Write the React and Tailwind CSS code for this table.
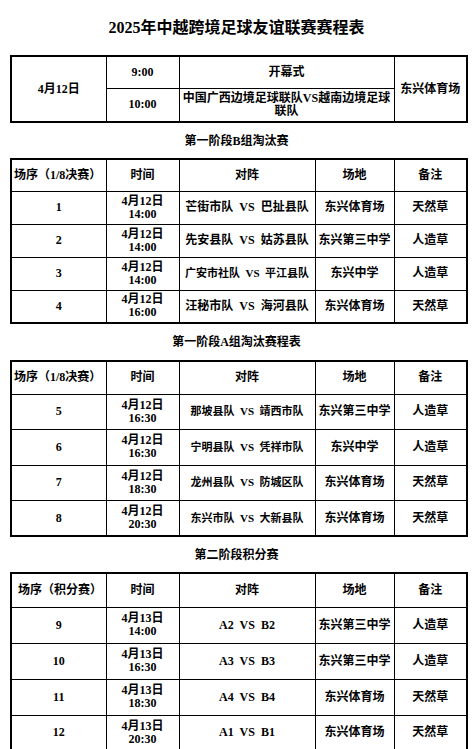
const font = {
  fontFamily: '"Liberation Serif", "Noto Sans CJK SC", serif',
};

const groupB = [
  ["1", "4月12日", "14:00", "芒街市队 VS 巴扯县队", "东兴体育场", "天然草", "text-[12px]"],
  ["2", "4月12日", "14:00", "先安县队 VS 姑苏县队", "东兴第三中学", "人造草", "text-[12px]"],
  ["3", "4月12日", "14:00", "广安市社队 VS 平江县队", "东兴中学", "人造草", "text-[11px]"],
  ["4", "4月12日", "16:00", "汪秘市队 VS 海河县队", "东兴体育场", "天然草", "text-[12px]"],
];

const groupA = [
  ["5", "4月12日", "16:30", "那坡县队 VS 靖西市队", "东兴第三中学", "人造草", "text-[11px]"],
  ["6", "4月12日", "16:30", "宁明县队 VS 凭祥市队", "东兴中学", "人造草", "text-[11px]"],
  ["7", "4月12日", "18:30", "龙州县队 VS 防城区队", "东兴体育场", "天然草", "text-[11px]"],
  ["8", "4月12日", "20:30", "东兴市队 VS 大新县队", "东兴体育场", "天然草", "text-[11px]"],
];

const points = [
  ["9", "4月13日", "14:00", "A2 VS B2", "东兴第三中学", "人造草", "text-[12px]"],
  ["10", "4月13日", "16:30", "A3 VS B3", "东兴第三中学", "人造草", "text-[12px]"],
  ["11", "4月13日", "18:30", "A4 VS B4", "东兴体育场", "天然草", "text-[12px]"],
  ["12", "4月13日", "20:30", "A1 VS B1", "东兴体育场", "天然草", "text-[12px]"],
];

const td = "border border-black p-0 text-center align-middle font-bold text-[12px] leading-[13px]";

const SectionTitle = ({ children, h }) => (
  <div className={`flex items-center justify-center font-bold text-[12px] ${h}`}>
    {children}
  </div>
);

const MatchTable = ({ firstHead, rows, headH, rowH }) => (
  <table className="ml-[10px] w-[456px] table-fixed border-collapse border-2 border-black">
    <colgroup>
      <col className="w-[95px]" />
      <col className="w-[73px]" />
      <col className="w-[136px]" />
      <col className="w-[79px]" />
      <col className="w-[73px]" />
    </colgroup>
    <tbody>
      <tr className={headH}>
        <td className={`${td} text-left pl-[2px] whitespace-nowrap`}>{firstHead}</td>
        <td className={td}>时间</td>
        <td className={td}>对阵</td>
        <td className={td}>场地</td>
        <td className={td}>备注</td>
      </tr>
      {rows.map((r) => (
        <tr key={r[0]} className={rowH}>
          <td className={td}>{r[0]}</td>
          <td className={td}>
            {r[1]}
            <br />
            {r[2]}
          </td>
          <td className={`${td} whitespace-pre`}>
            <span className={r[6]}>{r[3].replace(/ /g, "  ")}</span>
          </td>
          <td className={`${td} whitespace-nowrap`}>{r[4]}</td>
          <td className={td}>{r[5]}</td>
        </tr>
      ))}
    </tbody>
  </table>
);

export default function App() {
  return (
    <div className="w-[473px] h-[749px] overflow-hidden bg-white text-black" style={font}>
      {/* Header */}
      <div className="h-[55px] flex items-center justify-center text-[16px] font-bold">
        2025年中越跨境足球友谊联赛赛程表
      </div>

      {/* Opening */}
      <table className="ml-[10px] w-[456px] table-fixed border-collapse border-2 border-black">
        <colgroup>
          <col className="w-[95px]" />
          <col className="w-[73px]" />
          <col className="w-[215px]" />
          <col className="w-[73px]" />
        </colgroup>
        <tbody>
          <tr className="h-[32px]">
            <td rowSpan={2} className={td}>4月12日</td>
            <td className={td}>9:00</td>
            <td className={td}>开幕式</td>
            <td rowSpan={2} className={td}>东兴体育场</td>
          </tr>
          <tr className="h-[34px]">
            <td className={td}>10:00</td>
            <td className={td}>
              中国广西边境足球联队VS越南边境足球
              <br />
              联队
            </td>
          </tr>
        </tbody>
      </table>

      <SectionTitle h="h-[35px]">第一阶段B组淘汰赛</SectionTitle>
      <MatchTable firstHead="场序（1/8决赛）" rows={groupB} headH="h-[32px]" rowH="h-[33px]" />

      <SectionTitle h="h-[36px]">第一阶段A组淘汰赛程表</SectionTitle>
      <MatchTable firstHead="场序（1/8决赛）" rows={groupA} headH="h-[33px]" rowH="h-[35.5px]" />

      <SectionTitle h="h-[35px]">第二阶段积分赛</SectionTitle>
      <MatchTable firstHead={<span className="pl-[4px]">场序（积分赛）</span>} rows={points} headH="h-[34px]" rowH="h-[36px]" />
    </div>
  );
}
